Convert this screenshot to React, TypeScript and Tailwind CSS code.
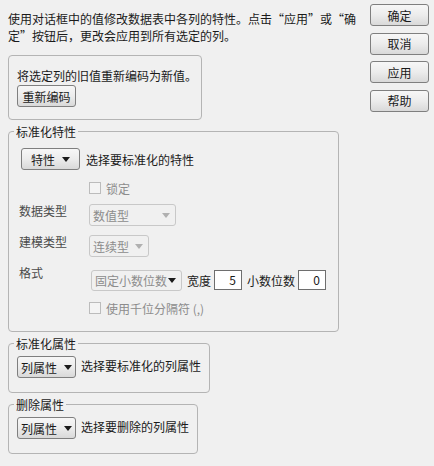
import React from "react";

const btn =
  "flex items-center justify-center rounded-[3px] border border-[#7f7f7f] bg-gradient-to-b from-[#f7f7f7] via-[#ececec] to-[#d9d9d9] text-[12px] text-[#1a1a1a]";

function Caret({ color = "#1a1a1a" }: { color?: string }) {
  return (
    <svg width="8" height="5" viewBox="0 0 8 5" className="shrink-0">
      <path d="M0 0 L8 0 L4 5 Z" fill={color} />
    </svg>
  );
}

function MenuButton({ label, width }: { label: string; width: string }) {
  return (
    <div className={`${btn} ${width} h-[22px] gap-[7px]`}>
      <span>{label}</span>
      <Caret />
    </div>
  );
}

function Checkbox({ label }: { label: string }) {
  return (
    <div className="flex h-[12px] items-center gap-[5px]">
      <div className="h-[12px] w-[12px] border border-[#bcbcbc] bg-[#f4f4f4]" />
      <span className="text-[#8c8c8c]">{label}</span>
    </div>
  );
}

function Select({ label, width, caret = "#b0b0b0", height = "h-[22px]" }: { label: string; width: string; caret?: string; height?: string }) {
  return (
    <div
      className={`flex ${width} ${height} items-center justify-between whitespace-nowrap rounded-[3px] border border-[#c8c8c8] bg-[#f0f0f0] pl-[3px] pr-[5px] text-[#8c8c8c]`}
    >
      <span>{label}</span>
      <Caret color={caret} />
    </div>
  );
}

function Group({ title, width, children }: { title: string; width: string; children: React.ReactNode }) {
  return (
    <fieldset className={`${width} rounded-[4px] border border-[#b4b4b4] px-0`}>
      <legend className="ml-[5px] px-[2px] leading-[17px]">{title}</legend>
      {children}
    </fieldset>
  );
}

export default function App() {
  return (
    <div className="flex h-[466px] w-[434px] bg-[#f0f0f0] font-['Noto_Sans_CJK_SC',sans-serif] text-[12px] leading-[17px] text-[#1a1a1a]">
      <div className="flex w-[362px] flex-col pl-[8px]">
        <p className="mt-[10px] w-[350px]">
          使用对话框中的值修改数据表中各列的特性。点击“应用”或“确定”按钮后，更改会应用到所有选定的列。
        </p>

        <div className="mt-[11px] h-[65px] w-[194px] rounded-[4px] border border-[#b4b4b4] px-[8px] pt-[11px]">
          <div className="whitespace-nowrap">将选定列的旧值重新编码为新值。</div>
          <div className={`${btn} mt-[1px] h-[22px] w-[59px]`}>重新编码</div>
        </div>

        <div className="mt-[3px]">
          <Group title="标准化特性" width="w-[331px]">
            <div className="pb-[17px]">
              <div className="mt-[8px] flex items-center gap-[6px] pl-[12px]">
                <MenuButton label="特性" width="w-[59px]" />
                <span>选择要标准化的特性</span>
              </div>
              <div className="mt-[12px] pl-[80px]">
                <Checkbox label="锁定" />
              </div>
              <div className="mt-[10px] flex items-start pl-[10px]">
                <span className="-mt-[2px] w-[70px] text-[#4a4a4a]">数据类型</span>
                <Select label="数值型" width="w-[87px]" />
              </div>
              <div className="mt-[9px] flex items-start pl-[10px]">
                <span className="-mt-[2px] w-[70px] text-[#4a4a4a]">建模类型</span>
                <Select label="连续型" width="w-[60px]" />
              </div>
              <div className="mt-[13px] flex items-start pl-[10px]">
                <span className="-mt-[6px] w-[72px] text-[#4a4a4a]">格式</span>
                <Select label="固定小数位数" width="w-[91px]" height="h-[21px]" caret="#1a1a1a" />
                <span className="ml-[5px] leading-[21px]">宽度</span>
                <div className="ml-[3px] h-[20px] w-[28px] border border-[#6e6e6e] bg-white pr-[5px] text-right leading-[18px]">5</div>
                <span className="ml-[5px] leading-[21px]">小数位数</span>
                <div className="ml-[3px] h-[20px] w-[28px] border border-[#6e6e6e] bg-white pr-[5px] text-right leading-[18px]">0</div>
              </div>
              <div className="mt-[11px] pl-[80px]">
                <Checkbox label="使用千位分隔符 (,)" />
              </div>
            </div>
          </Group>
        </div>

        <div className="mt-[3px]">
          <Group title="标准化属性" width="w-[202px]">
            <div className="mt-[4px] flex items-center gap-[5px] pb-[14px] pl-[8px]">
              <MenuButton label="列属性" width="w-[59px]" />
              <span className="-mt-[3px]">选择要标准化的列属性</span>
            </div>
          </Group>
        </div>

        <div className="mt-[3px]">
          <Group title="删除属性" width="w-[190px]">
            <div className="mt-[4px] flex items-center gap-[5px] pb-[14px] pl-[8px]">
              <MenuButton label="列属性" width="w-[59px]" />
              <span className="-mt-[3px]">选择要删除的列属性</span>
            </div>
          </Group>
        </div>
      </div>

      <div className="ml-[8px] mt-[4px] flex flex-col gap-[6.5px]">
        {["确定", "取消", "应用", "帮助"].map((t) => (
          <div key={t} className={`${btn} h-[22px] w-[59px]`}>
            {t}
          </div>
        ))}
      </div>
    </div>
  );
}
